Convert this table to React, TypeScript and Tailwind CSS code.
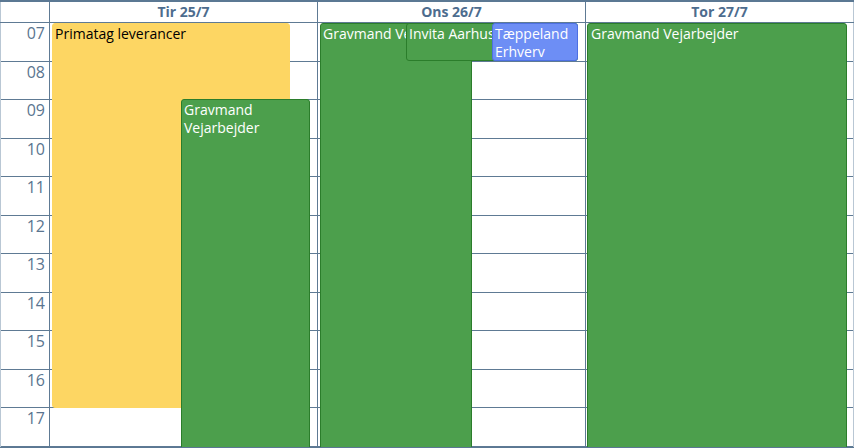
import React from "react";

const rows = [
  { label: "07", h: "h-[39px]" },
  { label: "08", h: "h-[38px]" },
  { label: "09", h: "h-[39px]" },
  { label: "10", h: "h-[38px]" },
  { label: "11", h: "h-[39px]" },
  { label: "12", h: "h-[38px]" },
  { label: "13", h: "h-[39px]" },
  { label: "14", h: "h-[38px]" },
  { label: "15", h: "h-[39px]" },
  { label: "16", h: "h-[38px]" },
  { label: "17", h: "h-[39px]" },
];

function GridRows() {
  return (
    <>
      {rows.map((r) => (
        <div key={r.label} className={`${r.h} border-b border-[#5e7a94]`} />
      ))}
    </>
  );
}

export default function App() {
  return (
    <div className="w-[854px] h-[448px] overflow-hidden bg-white border-t-2 border-b border-[#5b7893] font-['Open_Sans',sans-serif]">
      {/* header */}
      <div className="flex h-[21px] border-b border-[#5e7a94]">
        <div className="w-[50px] border-l border-l-[#b9c7d4] border-r border-r-[#5e7a94]" />
        {["Tir 25/7", "Ons 26/7", "Tor 27/7"].map((d, i) => (
          <div
            key={d}
            className={`w-[268px] border-r ${i === 2 ? "border-r-[#b9c7d4]" : "border-r-[#5e7a94]"} text-center text-[14px] leading-[20px] font-bold text-[#4d6c8e]`}
          >
            {d}
          </div>
        ))}
      </div>
      {/* body */}
      <div className="flex">
        <div className="w-[50px] border-l border-l-[#b9c7d4] border-r border-r-[#5e7a94]">
          {rows.map((r) => (
            <div
              key={r.label}
              className={`${r.h} border-b border-[#5e7a94] text-right pr-[4px] text-[16px] leading-[20px] text-[#5a7590]`}
            >
              {r.label}
            </div>
          ))}
        </div>

        {/* Tir */}
        <div className="relative w-[268px] border-r border-[#5e7a94]">
          <GridRows />
          <div className="absolute left-[2px] top-0 w-[238px] h-[385px] rounded-[3px] bg-[#fdd663] border border-[#fdd663] px-[2px] pt-[1px] text-[14px] leading-[18px] text-black">
            Primatag leverancer
          </div>
          <div className="absolute left-[131px] top-[76px] w-[129px] h-[400px] rounded-[3px] bg-[#4c9f4c] border border-[#2b7d2b] px-[2px] pt-[1px] text-[14px] leading-[18px] text-white">
            Gravmand Vejarbejder
          </div>
        </div>

        {/* Ons */}
        <div className="relative w-[268px] border-r border-[#5e7a94]">
          <GridRows />
          <div className="absolute left-[2px] top-0 w-[152px] h-[440px] rounded-[3px] bg-[#4c9f4c] border border-[#2b7d2b] px-[2px] pt-[1px] text-[14px] leading-[18px] text-white whitespace-nowrap overflow-hidden">
            Gravmand Vejarbejder
          </div>
          <div className="absolute left-[88px] top-0 w-[172px] h-[38px] rounded-[3px] bg-[#4c9f4c] border border-[#2b7d2b] px-[2px] pt-[1px] text-[14px] leading-[18px] text-white whitespace-nowrap overflow-hidden">
            Invita Aarhus
          </div>
          <div className="absolute left-[174px] top-0 w-[86px] h-[38px] rounded-[3px] bg-[#6d8ef5] border border-[#4d70e2] px-[2px] pt-[1px] text-[14px] leading-[18px] text-white">
            Tæppeland Erhverv
          </div>
        </div>

        {/* Tor */}
        <div className="relative w-[268px] border-r border-[#b9c7d4]">
          <GridRows />
          <div className="absolute left-[1px] top-0 w-[260px] h-[440px] rounded-[3px] bg-[#4c9f4c] border border-[#2b7d2b] px-[3px] pt-[1px] text-[14px] leading-[18px] text-white">
            Gravmand Vejarbejder
          </div>
        </div>
      </div>
    </div>
  );
}
